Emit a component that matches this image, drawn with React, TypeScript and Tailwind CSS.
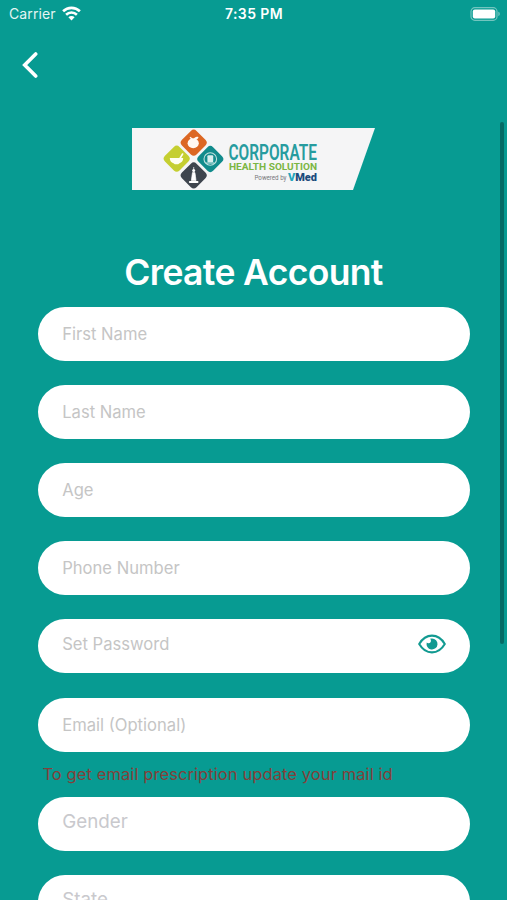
type FieldProps = {
  label: string;
  textClass?: string;
  secure?: boolean;
};

const fields: FieldProps[] = [
  { label: "First Name" },
  { label: "Last Name" },
  { label: "Age" },
  { label: "Phone Number" },
  { label: "Set Password", secure: true, textClass: "pb-[5px]" },
  { label: "Email (Optional)" },
];

export default function App() {
  return (
    <div className="relative flex h-[900px] w-[507px] flex-col overflow-hidden bg-[#079b92] font-['Inter','Liberation_Sans',sans-serif]">
      <StatusBar />
      <button className="ml-[22px] mt-[24px] h-7 w-4" aria-label="Back">
        <svg viewBox="0 0 16 28" className="h-7 w-4" fill="none">
          <path
            d="M13.7 3 2.7 14l11 11"
            stroke="white"
            strokeWidth="3.6"
            strokeLinecap="round"
            strokeLinejoin="miter"
          />
        </svg>
      </button>

      <div className="mt-[49px] flex justify-center pl-[0.6px]">
        <Logo />
      </div>

      <h1 className="mt-[60px] text-center text-[35.5px] font-semibold leading-[46px] tracking-[-0.65px] text-white">
        Create Account
      </h1>

      <form className="mt-[10.6px] flex flex-col pl-[37.8px] pr-[37px]">
        <div className="flex flex-col gap-[24.2px]">
          {fields.map((field) => (
            <Field key={field.label} {...field} />
          ))}
        </div>
        <p className="flex h-[45px] items-center pl-[4.6px] text-[16.5px] tracking-[0.09px] text-[#833f3a]">
          To get email prescription update your mail id
        </p>
        <div className="flex flex-col gap-[24.2px]">
          <Field label="Gender" textClass="pb-1 text-[18.8px] text-[#c9c9cd]" />
          <Field label="State" textClass="pb-1 text-[18.8px] text-[#c9c9cd]" />
        </div>
      </form>

      {/* scroll indicator */}
      <div className="absolute left-[500px] top-[122px] h-[522px] w-[3.5px] rounded-full bg-[#056c66]" />
    </div>
  );
}

const Field = ({ label, secure, textClass = "" }: FieldProps) => {
  return (
    <div className="flex h-[54px] shrink-0 items-center justify-between rounded-full bg-white pl-[24.4px] pr-[24px] pt-px">
      <span className={textClass.includes("text-[") ? textClass : `text-[16.6px] text-[#c5c5c5] ${textClass}`}>
        {label}
      </span>
      {secure && <EyeIcon />}
    </div>
  );
};

const EyeIcon = () => (
  <svg viewBox="0 0 28 20" className="mb-[6px] h-5 w-7" fill="none">
    <path
      d="M1.2 10C4.5 4.4 9 1.6 14 1.6S23.5 4.4 26.8 10C23.5 15.6 19 18.4 14 18.4S4.5 15.6 1.2 10Z"
      stroke="#129a91"
      strokeWidth="2.1"
      strokeLinejoin="round"
    />
    <path
      d="M14 4.5A5.5 5.5 0 1 1 8.7 8.6a2.5 2.5 0 0 0 4.1-.9c.4-1.2 0-2.3-.8-2.9A5.6 5.6 0 0 1 14 4.5Z"
      fill="#129a91"
    />
  </svg>
);

const StatusBar = () => {
  return (
    <div className="grid h-[27px] shrink-0 grid-cols-3 items-center pl-[9px] pr-[6px] text-[14px] text-white">
      <div className="flex items-center gap-[6px]">
        <span className="tracking-[0.1px] text-[#e4f5f3]">Carrier</span>
        <svg viewBox="0 0 19 15" className="h-[15px] w-[19px]" fill="none" stroke="white" strokeWidth="2.6">
          <path d="M1.1 5.3a12 12 0 0 1 16.8 0" />
          <path d="M4.1 8.7a7.7 7.7 0 0 1 10.8 0" />
          <path d="M6.4 11.3a4.3 4.3 0 0 1 6.2 0L9.5 14.6Z" fill="white" stroke="none" />
        </svg>
      </div>
      <span className="pr-[2px] text-center font-semibold tracking-[0.4px]">7:35 PM</span>
      <svg viewBox="0 0 31 14" className="h-[14px] w-[31px] justify-self-end">
        <rect x="1" y="0.7" width="26" height="12.6" rx="3.8" fill="none" stroke="#73c5bf" strokeWidth="1.2" />
        <rect x="2.8" y="2.5" width="22.4" height="9" rx="2" fill="white" />
        <path d="M28.3 4.8c2 .6 2 3.8 0 4.4Z" fill="#73c5bf" />
      </svg>
    </div>
  );
};

const Logo = () => {
  return (
    <svg
      viewBox="0 0 243 62"
      className="h-[62px] w-[243px]"
      fontFamily="Roboto, 'Liberation Sans', sans-serif"
    >
      <path d="M0 0h243l-22 62H0Z" fill="#f5f5f6" />
      <rect x="51.4" y="4.4" width="20.6" height="20.6" rx="4" fill="#dc6723" transform="rotate(45 61.7 14.7)" />
      <rect x="34.4" y="20.4" width="20.6" height="20.6" rx="4" fill="#c5cf31" transform="rotate(45 44.7 30.7)" />
      <rect x="68" y="20.7" width="20.6" height="20.6" rx="4" fill="#118b8c" transform="rotate(45 78.3 31)" />
      <rect x="51.4" y="37.1" width="20.6" height="20.6" rx="4" fill="#3e454e" transform="rotate(45 61.7 47.4)" />

      {/* apple */}
      <ellipse cx="61.2" cy="15.2" rx="5.6" ry="5" fill="#fff8f2" />
      <path d="M61.5 11.5c1-2.6 3-3.4 5-2.4-.5 2.2-2.4 3.5-5 2.4Z" fill="#fff8f2" />
      <path d="m58 9.2 2.4 2" stroke="#fff8f2" strokeWidth="1.3" />
      {/* mortar and pestle */}
      <path d="M37.8 30h13.4c0 2.8-1.6 4.6-3.7 5.2l-1.3 1h-3.4l-1.3-1c-2.2-.7-3.7-2.4-3.7-5.2Z" fill="#fffff2" />
      <path d="m48.2 30 2.4-4" stroke="#fffff2" strokeWidth="1.6" strokeLinecap="round" />
      {/* monitor badge */}
      <circle cx="78.3" cy="31" r="6.3" fill="none" stroke="#bfe0df" strokeWidth="1.1" />
      <rect x="75.4" y="27.3" width="5.8" height="7" rx="1" fill="#d9efee" />
      <path d="M74.2 35h8.2" stroke="#d9efee" strokeWidth="1" />
      {/* figure */}
      <circle cx="61.7" cy="42.6" r="1.5" fill="white" />
      <path d="M61.7 39v3M60.5 44.6h2.4l.6 4 .5 4h-4.6l.5-4Z" stroke="white" strokeWidth=".7" fill="white" />
      <path d="M57.8 54h7.8" fill="none" stroke="white" strokeWidth="1.8" strokeLinecap="round" />

      <text
        transform="translate(96.5 32) scale(1 1.3)"
        fontSize="16.8"
        fontWeight="600"
        fill="#279c9f"
        textLength="88.5"
        lengthAdjust="spacingAndGlyphs"
      >
        CORPORATE
      </text>
      <text x="97" y="42.3" fontSize="9.7" fontWeight="700" fill="#7bb642" textLength="88" lengthAdjust="spacingAndGlyphs">
        HEALTH SOLUTION
      </text>
      <text x="122.5" y="52.3" fontSize="6.4" fill="#77777c" textLength="32" lengthAdjust="spacingAndGlyphs">
        Powered by
      </text>
      <text x="156" y="53.2" fontSize="10.8" fontWeight="900" fill="#1b4a7c" textLength="29" lengthAdjust="spacingAndGlyphs">
        <tspan fill="#25a6bd">V</tspan>Med
      </text>
    </svg>
  );
};
